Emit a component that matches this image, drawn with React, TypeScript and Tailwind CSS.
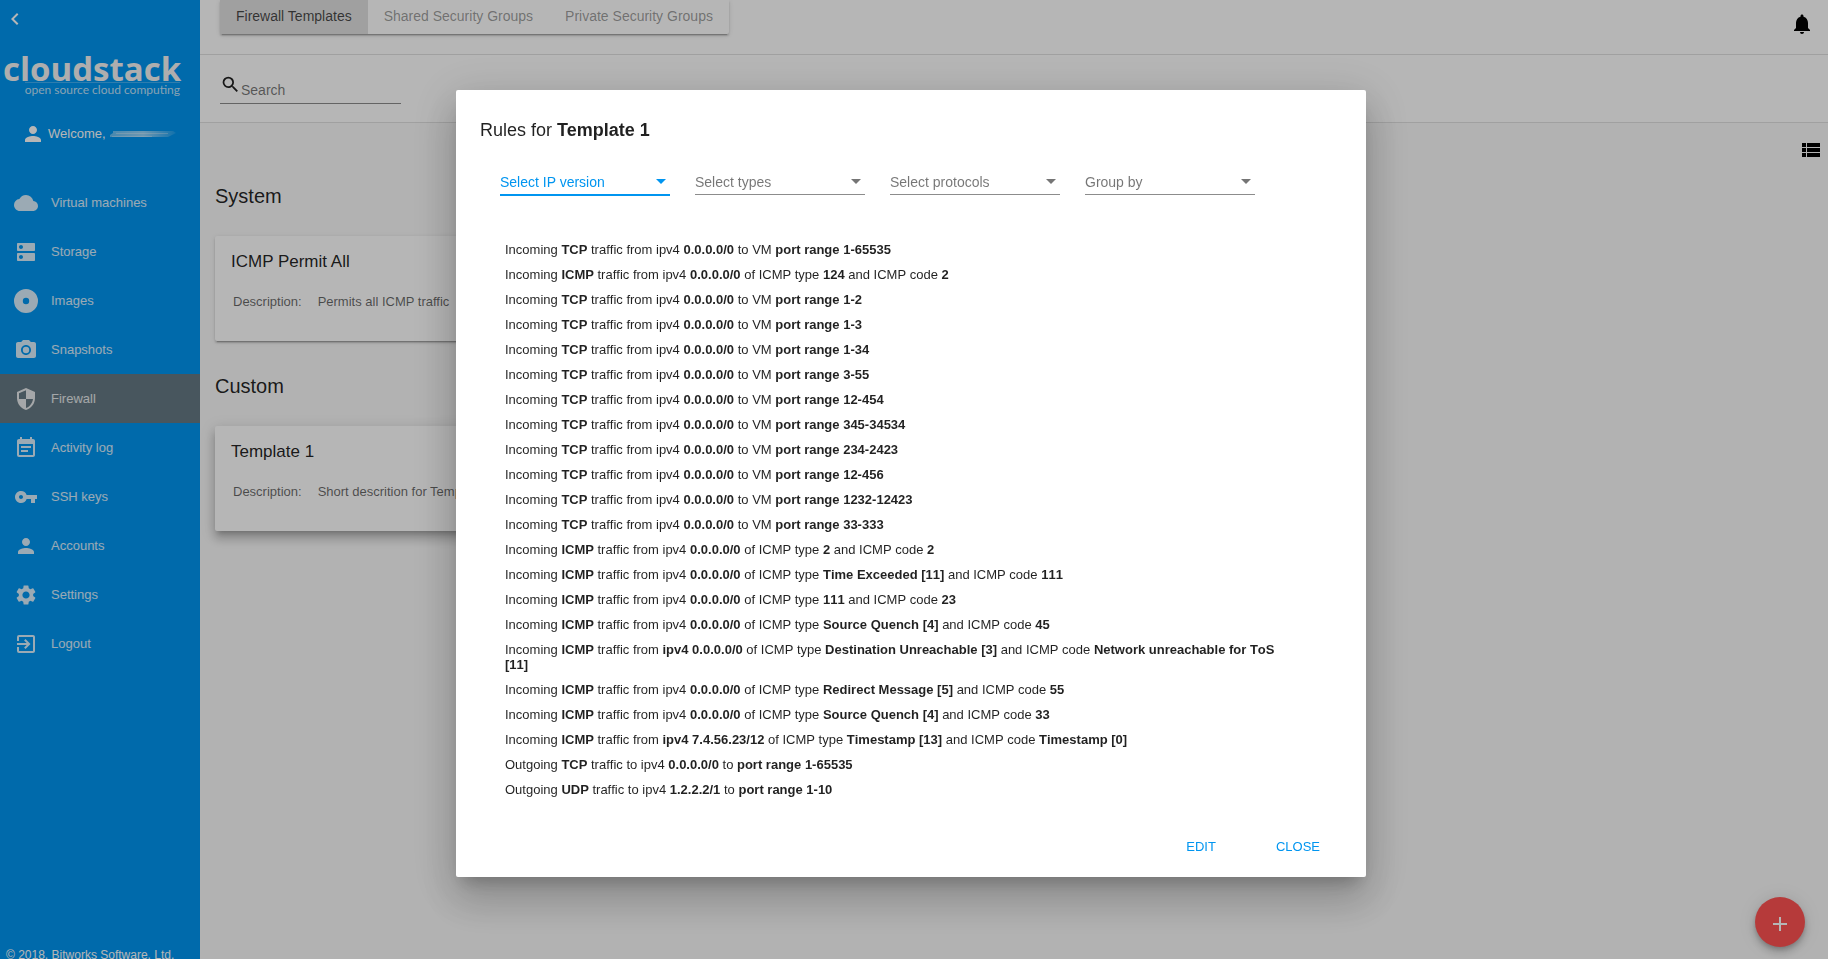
import type { ComponentType, ReactNode } from 'react';
import {
  MdAdd,
  MdCloud,
  MdDns,
  MdEventNote,
  MdExitToApp,
  MdKeyboardArrowLeft,
  MdNotifications,
  MdPerson,
  MdPhotoCamera,
  MdSearch,
  MdSecurity,
  MdSettings,
  MdViewList,
  MdVpnKey,
} from 'react-icons/md';

type IconProps = { className?: string };

function DiscIcon({ className }: IconProps) {
  return (
    <svg viewBox="0 0 24 24" className={className} fill="currentColor" aria-hidden="true">
      <path
        fillRule="evenodd"
        d="M12 0a12 12 0 1 0 0 24 12 12 0 0 0 0-24zm0 8.8a3.2 3.2 0 1 1 0 6.4 3.2 3.2 0 0 1 0-6.4z"
      />
    </svg>
  );
}

const NAV: { label: string; icon: ComponentType<IconProps>; active?: boolean }[] = [
  { label: 'Virtual machines', icon: MdCloud },
  { label: 'Storage', icon: MdDns },
  { label: 'Images', icon: DiscIcon },
  { label: 'Snapshots', icon: MdPhotoCamera },
  { label: 'Firewall', icon: MdSecurity, active: true },
  { label: 'Activity log', icon: MdEventNote },
  { label: 'SSH keys', icon: MdVpnKey },
  { label: 'Accounts', icon: MdPerson },
  { label: 'Settings', icon: MdSettings },
  { label: 'Logout', icon: MdExitToApp },
];

function Logo() {
  return (
    <div className="mt-[19px] ml-[3px] flex w-[177px] flex-col">
      <span className="font-['Open_Sans',sans-serif] text-[33px] leading-[38px] font-bold text-[#f4f4f4]">
        cloudstack
      </span>
      <span className="-mt-[6px] self-end border-t border-white/25 font-[Lato,sans-serif] text-[12px] leading-[14px] whitespace-nowrap text-white/75">
        open source cloud computing
      </span>
    </div>
  );
}

function Sidebar() {
  return (
    <aside className="flex h-screen w-[200px] shrink-0 flex-col overflow-hidden bg-[#0095f0] text-[13px] text-white/85">
      <button type="button" aria-label="Collapse menu" className="mt-[7px] ml-[3px] size-6 text-white">
        <MdKeyboardArrowLeft className="size-6" />
      </button>
      <Logo />
      <div className="mt-[25px] flex h-6 items-center pl-[21px] text-white">
        <MdPerson className="size-6" />
        <span className="ml-[3px]">Welcome,</span>
        <svg viewBox="0 0 66 8" className="ml-1 h-2 w-[66px]" aria-hidden="true">
          <defs>
            <linearGradient id="smudge" x1="0" x2="1">
              <stop offset="0" stopColor="#fff" stopOpacity=".4" />
              <stop offset=".5" stopColor="#fff" stopOpacity=".6" />
              <stop offset="1" stopColor="#fff" stopOpacity=".1" />
            </linearGradient>
          </defs>
          <path d="M3 1h60l3 2-4 2-4 2H0V5l3-2z" fill="url(#smudge)" />
          <path d="M6 3.5h52M2 6.5h40" stroke="#fff" strokeOpacity=".3" />
        </svg>
      </div>
      <nav className="mt-8 flex flex-col">
        {NAV.map(({ label, icon: Icon, active }) => (
          <a
            key={label}
            href="#"
            className={`flex h-[49px] items-center gap-[13px] pl-3.5 ${active ? 'bg-[#657984]' : ''}`}
          >
            <Icon className="size-6" />
            {label}
          </a>
        ))}
      </nav>
      <footer className="mt-auto -mb-1 pl-1.5 text-[12px] leading-4 text-white">
        © 2018, Bitworks Software, Ltd.
      </footer>
    </aside>
  );
}

function TemplateCard({ title, text, raised }: { title: string; text: string; raised?: boolean }) {
  return (
    <article
      className={`h-[105px] w-[420px] rounded-[2px] bg-white px-4 pt-4 ${
        raised
          ? 'shadow-[0_5px_5px_-3px_rgba(0,0,0,0.2),0_8px_10px_1px_rgba(0,0,0,0.14),0_3px_14px_2px_rgba(0,0,0,0.12)]'
          : 'shadow-[0_3px_1px_-2px_rgba(0,0,0,0.2),0_2px_2px_0_rgba(0,0,0,0.14),0_1px_5px_0_rgba(0,0,0,0.12)]'
      }`}
    >
      <h3 className="text-[17px] leading-5">{title}</h3>
      <dl className="mt-5 flex gap-4 pl-0.5 text-[13px] leading-5 whitespace-nowrap text-black/60">
        <dt>Description:</dt>
        <dd>{text}</dd>
      </dl>
    </article>
  );
}

function MainPage() {
  return (
    <main className="flex min-w-0 flex-1 flex-col bg-[#fafafa]">
      <header className="flex h-[55px] items-start justify-between border-b border-black/12 bg-white pr-3.5 pl-5">
        <div className="flex h-[34px] rounded-b-[2px] text-[14px] text-black/40 shadow-[0_3px_1px_-2px_rgba(0,0,0,0.2),0_2px_2px_0_rgba(0,0,0,0.14),0_1px_5px_0_rgba(0,0,0,0.12)]">
          <button type="button" className="bg-[#e0e0e0] px-4 pb-0.5 text-black/70">
            Firewall Templates
          </button>
          <button type="button" className="px-4 pb-0.5">
            Shared Security Groups
          </button>
          <button type="button" className="px-4 pb-0.5">
            Private Security Groups
          </button>
        </div>
        <button type="button" aria-label="Notifications" className="mt-3 text-black">
          <MdNotifications className="size-6" />
        </button>
      </header>
      <div className="flex h-[68px] items-start border-b border-black/12 bg-white pl-5">
        <label className="mt-[18px] flex h-[31px] w-[181px] items-start border-b border-black/45">
          <MdSearch className="mt-px size-[21px] shrink-0" />
          <input
            aria-label="Search"
            placeholder="Search"
            className="mt-[7px] w-full min-w-0 bg-transparent text-[14px] leading-5 outline-none placeholder:text-black/55"
          />
        </label>
      </div>
      <div className="flex justify-end pt-[15px] pr-[5px]">
        <button type="button" aria-label="List view" className="text-black">
          <MdViewList className="size-6" />
        </button>
      </div>
      <section className="flex flex-col pl-[15px]">
        <h2 className="mt-[22px] text-[20px] leading-6">System</h2>
        <div className="mt-7">
          <TemplateCard title="ICMP Permit All" text="Permits all ICMP traffic" />
        </div>
        <h2 className="mt-[33px] text-[20px] leading-6">Custom</h2>
        <div className="mt-7">
          <TemplateCard title="Template 1" text="Short descrition for Template 1" raised />
        </div>
      </section>
      <button
        type="button"
        aria-label="Create template"
        className="fixed right-[23px] bottom-3 flex size-[50px] items-center justify-center rounded-full bg-[#ff5252] text-white shadow-[0_3px_5px_-1px_rgba(0,0,0,0.2),0_6px_10px_0_rgba(0,0,0,0.14),0_1px_18px_0_rgba(0,0,0,0.12)]"
      >
        <MdAdd className="mt-1 size-6" />
      </button>
    </main>
  );
}

function Filter({ label, focused }: { label: string; focused?: boolean }) {
  return (
    <div
      className={`relative flex w-[170px] items-start pt-0.5 ${
        focused ? 'h-[26px] border-b-2 border-[#0095f0] text-[#0095f0]' : 'h-[25px] border-b border-black/45 text-black/54'
      }`}
    >
      <select aria-label={label} className="w-full appearance-none bg-transparent text-[14px] leading-5 outline-none">
        <option>{label}</option>
      </select>
      <svg
        viewBox="0 0 10 5"
        className="pointer-events-none absolute top-[9px] right-1 h-[5px] w-2.5"
        fill="currentColor"
        aria-hidden="true"
      >
        <path d="M0 0h10L5 5z" />
      </svg>
    </div>
  );
}

const B = ({ children }: { children: ReactNode }) => <b className="font-bold">{children}</b>;

function tcp(range: string) {
  return (
    <>
      Incoming <B>TCP</B> traffic from ipv4 <B>0.0.0.0/0</B> to VM <B>port range {range}</B>
    </>
  );
}

function icmp(type: string, code: string, source: ReactNode = <>ipv4 <B>0.0.0.0/0</B></>) {
  return (
    <>
      Incoming <B>ICMP</B> traffic from {source} of ICMP type <B>{type}</B> and ICMP code <B>{code}</B>
    </>
  );
}

const RULES: ReactNode[] = [
  tcp('1-65535'),
  icmp('124', '2'),
  tcp('1-2'),
  tcp('1-3'),
  tcp('1-34'),
  tcp('3-55'),
  tcp('12-454'),
  tcp('345-34534'),
  tcp('234-2423'),
  tcp('12-456'),
  tcp('1232-12423'),
  tcp('33-333'),
  icmp('2', '2'),
  icmp('Time Exceeded [11]', '111'),
  icmp('111', '23'),
  icmp('Source Quench [4]', '45'),
  icmp('Destination Unreachable [3]', 'Network unreachable for ToS [11]', <B>ipv4 0.0.0.0/0</B>),
  icmp('Redirect Message [5]', '55'),
  icmp('Source Quench [4]', '33'),
  icmp('Timestamp [13]', 'Timestamp [0]', <B>ipv4 7.4.56.23/12</B>),
  <>
    Outgoing <B>TCP</B> traffic to ipv4 <B>0.0.0.0/0</B> to <B>port range 1-65535</B>
  </>,
  <>
    Outgoing <B>UDP</B> traffic to ipv4 <B>1.2.2.2/1</B> to <B>port range 1-10</B>
  </>,
];

function RulesDialog() {
  return (
    <div
      role="dialog"
      aria-modal="true"
      aria-labelledby="rules-title"
      className="flex w-[910px] flex-col rounded-[2px] bg-white px-6 pt-6 pb-3 shadow-[0_11px_15px_-7px_rgba(0,0,0,0.2),0_24px_38px_3px_rgba(0,0,0,0.14),0_9px_46px_8px_rgba(0,0,0,0.12)]"
    >
      <h1 id="rules-title" className="mt-1 text-[18px] leading-6">
        Rules for <B>Template 1</B>
      </h1>
      <div className="mt-7 flex items-start gap-[25px] pl-5">
        <Filter label="Select IP version" focused />
        <Filter label="Select types" />
        <Filter label="Select protocols" />
        <Filter label="Group by" />
      </div>
      <ul className="mt-[46px] flex flex-col gap-2.5 pr-[60px] pl-[25px] text-[13px] leading-[15px] [font-kerning:none]">
        {RULES.map((rule, i) => (
          <li key={i}>{rule}</li>
        ))}
      </ul>
      <div className="mt-8 flex h-9 justify-end gap-7 text-[13px] text-[#0095f0]">
        <button type="button" className="px-4">
          EDIT
        </button>
        <button type="button" className="mr-1.5 px-4">
          CLOSE
        </button>
      </div>
    </div>
  );
}

export default function App() {
  return (
    <div className="flex h-screen overflow-hidden font-['Liberation_Sans',Arial,sans-serif] text-black/87">
      <Sidebar />
      <MainPage />
      <div className="fixed inset-0 flex items-center justify-center bg-black/[.288] pt-[7px] pr-1.5">
        <RulesDialog />
      </div>
    </div>
  );
}
